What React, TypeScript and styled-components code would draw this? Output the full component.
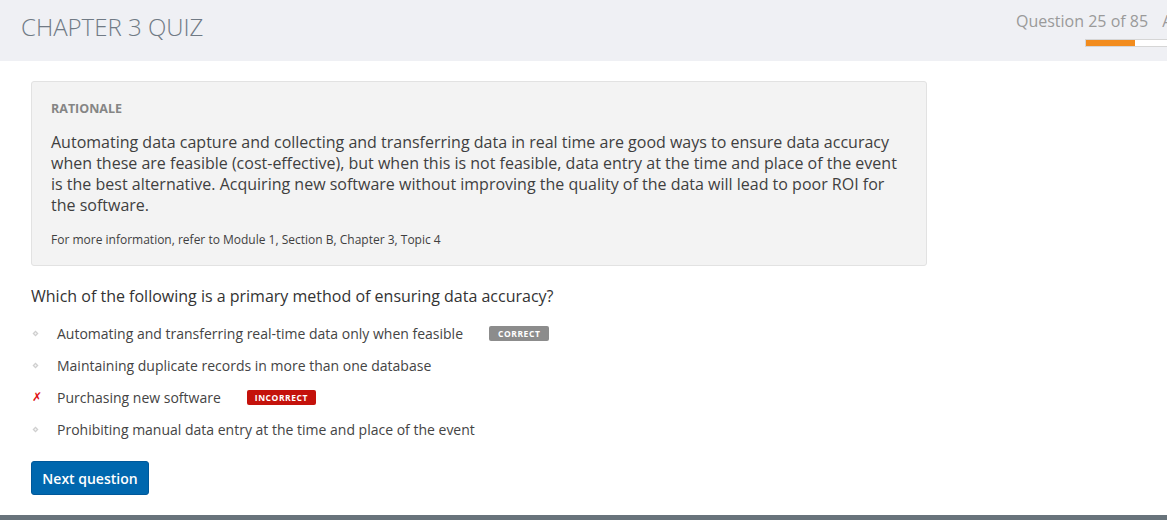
import React from "react";
import styled, { createGlobalStyle } from "styled-components";

const Global = createGlobalStyle`
  html, body { margin: 0; padding: 0; height: 100%; overflow: hidden; background: #fff; }
  body { font-family: "Open Sans", "Noto Sans", Arial, sans-serif; }
  #root { height: 100%; }
`;

const Page = styled.div`
  height: 520px;
  display: flex;
  flex-direction: column;
  overflow: hidden;
`;

const Header = styled.header`
  height: 61px;
  flex-shrink: 0;
  background: #eff0f4;
  display: flex;
  overflow: hidden;
`;

const Title = styled.h1`
  flex: 1;
  margin: 0;
  padding: 11px 0 0 21px;
  font-size: 24px;
  line-height: 32px;
  font-weight: 300;
  color: #707a85;
`;

const Progress = styled.div`
  width: 151px;
  flex-shrink: 0;
  display: flex;
  flex-direction: column;
  padding-top: 10px;
`;

const CounterRow = styled.div`
  display: flex;
  gap: 14px;
  white-space: nowrap;
  font-size: 16px;
  line-height: 22px;
  color: #9a9a9a;
`;

const Bar = styled.div`
  margin: 7px 0 0 69px;
  width: 110px;
  height: 8px;
  box-sizing: border-box;
  border: 1px solid #d6d6d6;
  background: #fff;
  display: flex;
`;

const BarFill = styled.div`
  background: #f28c1e;
  height: 100%;
`;

const Main = styled.main`
  flex: 1;
  padding: 20px 0 0 31px;
  display: flex;
  flex-direction: column;
`;

const Rationale = styled.section`
  width: 896px;
  box-sizing: border-box;
  background: #f3f3f3;
  border: 1px solid #e2e2e2;
  border-radius: 3px;
  padding: 18px 19px 17px;
  display: flex;
  flex-direction: column;
`;

const Label = styled.div`
  margin-bottom: 15px;
  font-size: 12.5px;
  line-height: 17px;
  font-weight: 700;
  color: #858585;
`;

const Body = styled.p`
  margin: 0 0 15px;
  font-size: 16px;
  line-height: 21px;
  color: #3f3f3f;
`;

const Ref = styled.p`
  margin: 0;
  font-size: 12px;
  line-height: 17px;
  color: #3f3f3f;
`;

const Question = styled.h2`
  margin: 19px 0 10px;
  font-size: 16px;
  line-height: 22px;
  font-weight: 400;
  color: #333;
`;

const Options = styled.ul`
  list-style: none;
  margin: 0;
  padding: 0;
`;

const Option = styled.li`
  height: 32px;
  display: flex;
  align-items: center;
  font-size: 14px;
  color: #444;
`;

const Marker = styled.span`
  width: 25px;
  flex-shrink: 0;
  display: flex;
  align-items: center;
  padding-left: 1px;
`;

const Cross = styled.span`
  color: #e01010;
  font-family: "DejaVu Sans", sans-serif;
  font-size: 12px;
  font-weight: 700;
  font-style: italic;
  line-height: 1;
`;

const Badge = styled.span<{ $tone: "correct" | "incorrect" }>`
  margin-left: 26px;
  height: 15px;
  padding: 0 ${(p) => (p.$tone === "correct" ? "9px" : "8px")};
  border-radius: 2px;
  background: ${(p) => (p.$tone === "correct" ? "#8c8c8c" : "#c4120b")};
  color: #fff;
  font-size: 8.5px;
  font-weight: 700;
  letter-spacing: 0.55px;
  line-height: 15px;
`;

const NextButton = styled.button`
  margin-top: 16px;
  align-self: flex-start;
  height: 34px;
  width: 118px;
  border: 1px solid #00589a;
  border-radius: 3px;
  background: #0067ae;
  color: #fff;
  font-family: "Open Sans", sans-serif;
  font-size: 14px;
  font-weight: 600;
  cursor: pointer;
`;

const Footer = styled.footer`
  height: 5px;
  flex-shrink: 0;
  background: #68737b;
`;

const Diamond = () => (
  <svg width="7" height="7" viewBox="0 0 7 7">
    <path d="M3.5 0.5 L6.5 3.5 L3.5 6.5 L0.5 3.5 Z" fill="#cfcfcf" />
    <path d="M3.5 2.3 L4.7 3.5 L3.5 4.7 L2.3 3.5 Z" fill="#f6f6f6" />
  </svg>
);

type Opt = { text: string; wrong?: boolean; badge?: "correct" | "incorrect" };

const options: Opt[] = [
  { text: "Automating and transferring real-time data only when feasible", badge: "correct" },
  { text: "Maintaining duplicate records in more than one database" },
  { text: "Purchasing new software", wrong: true, badge: "incorrect" },
  { text: "Prohibiting manual data entry at the time and place of the event" },
];

export default function App() {
  return (
    <>
      <Global />
      <Page>
        <Header>
          <Title>CHAPTER 3 QUIZ</Title>
          <Progress>
            <CounterRow>
              <span>Question 25 of 85</span>
              <span>All</span>
            </CounterRow>
            <Bar>
              <BarFill style={{ width: `${(25 / 85) * 100 * 1.55}%` }} />
            </Bar>
          </Progress>
        </Header>
        <Main>
          <Rationale>
            <Label>RATIONALE</Label>
            <Body>
              Automating data capture and collecting and transferring data in real time are good ways to ensure data
              accuracy when these are feasible (cost-effective), but when this is not feasible, data entry at the time
              and place of the event is the best alternative. Acquiring new software without improving the quality of
              the data will lead to poor ROI for the software.
            </Body>
            <Ref>For more information, refer to Module 1, Section B, Chapter 3, Topic 4</Ref>
          </Rationale>
          <Question>Which of the following is a primary method of ensuring data accuracy?</Question>
          <Options>
            {options.map((o) => (
              <Option key={o.text}>
                <Marker>{o.wrong ? <Cross>✗</Cross> : <Diamond />}</Marker>
                <span>{o.text}</span>
                {o.badge && <Badge $tone={o.badge}>{o.badge === "correct" ? "CORRECT" : "INCORRECT"}</Badge>}
              </Option>
            ))}
          </Options>
          <NextButton>Next question</NextButton>
        </Main>
        <Footer />
      </Page>
    </>
  );
}
